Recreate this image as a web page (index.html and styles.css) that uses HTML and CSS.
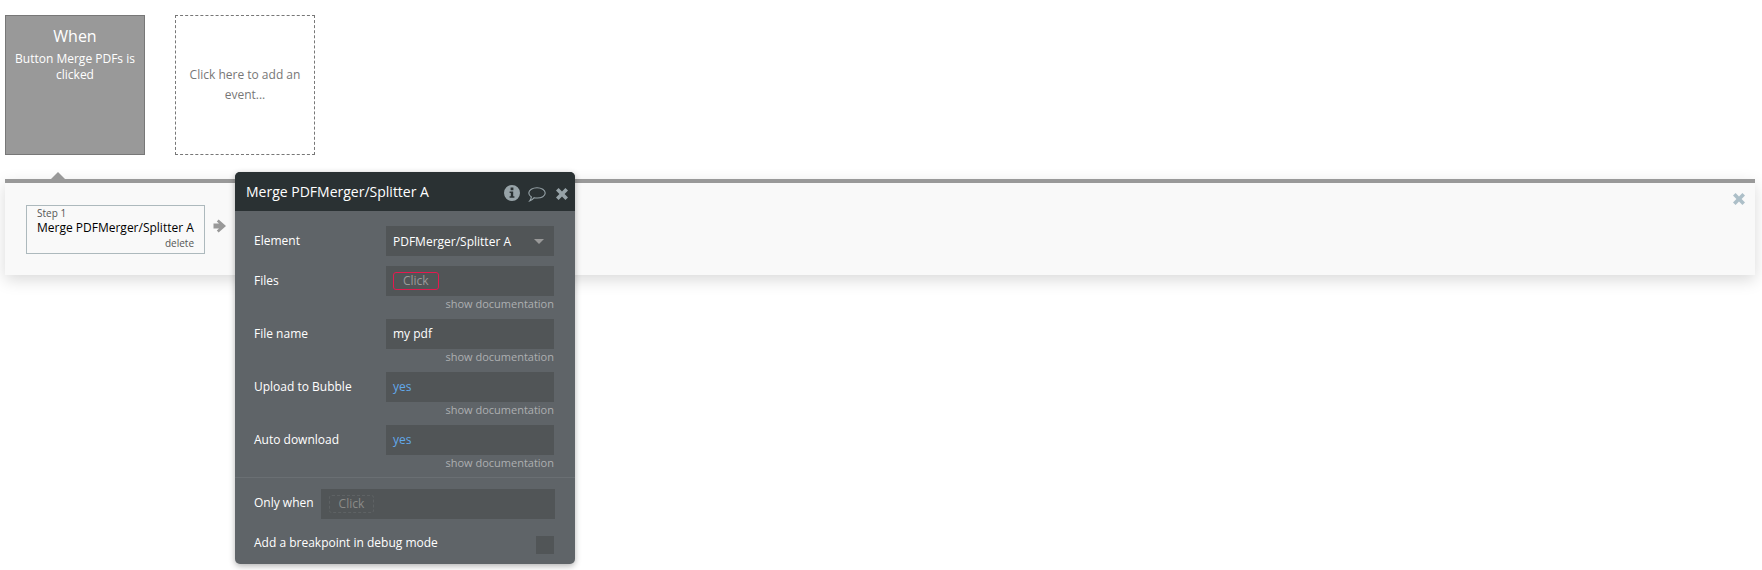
FILE: index.html
```html
<!DOCTYPE html>
<html lang="en">
<head>
<meta charset="utf-8">
<title>Workflow</title>
<link rel="stylesheet" href="styles.css">
</head>
<body>
<div class="events">
  <div class="event-card">
    <div class="event-title">When</div>
    <div class="event-desc">Button Merge PDFs is clicked</div>
  </div>
  <div class="event-add">Click here to add an event...</div>
</div>
<div class="sheet">
  <svg class="notch" width="16" height="8" viewBox="0 0 16 8"><path d="M0 8 L8 0 L16 8 Z"/></svg>
  <div class="step">
    <div class="step-num">Step 1</div>
    <div class="step-name">Merge PDFMerger/Splitter A</div>
    <div class="step-del">delete</div>
  </div>
  <svg class="step-arrow" width="14" height="14" viewBox="0 0 14 14"><path d="M.5 4.6 H6 L3.8 2.4 L5.6 .6 L13 7 L5.6 13.4 L3.8 11.6 L6 9.4 H.5 Z"/></svg>
  <svg class="sheet-close" width="14" height="14" viewBox="0 0 14 14"><path d="M1 3.6 L3.6 1 L7 4.4 L10.4 1 L13 3.6 L9.6 7 L13 10.4 L10.4 13 L7 9.6 L3.6 13 L1 10.4 L4.4 7 Z"/></svg>
</div>
<div class="popup">
  <div class="popup-head">
    <div class="popup-title">Merge PDFMerger/Splitter A</div>
    <svg class="ico-info" width="16" height="16" viewBox="0 0 16 16"><path fill-rule="evenodd" d="M8 0 A8 8 0 1 1 8 16 A8 8 0 1 1 8 0 Z M6.6 2.6 V5.2 H9.4 V2.6 Z M5.6 6.4 V8 H6.8 V11.2 H5.6 V12.8 H10.4 V11.2 H9.2 V6.4 Z"/></svg>
    <svg class="ico-chat" width="18" height="15" viewBox="0 0 18 15"><path d="M9 .8 C13.4 .8 17.2 2.9 17.2 6 C17.2 9 13.6 11.1 9 11 C8 11 7 10.9 6.2 10.7 C5 12.2 3.4 13.6 1.6 14 C2.6 12.8 3.2 11.4 3.4 9.9 C1.6 8.9 .8 7.5 .8 6 C.8 2.9 4.6 .8 9 .8 Z"/></svg>
    <svg class="ico-close" width="14" height="14" viewBox="0 0 14 14"><path d="M1 3.6 L3.6 1 L7 4.4 L10.4 1 L13 3.6 L9.6 7 L13 10.4 L10.4 13 L7 9.6 L3.6 13 L1 10.4 L4.4 7 Z"/></svg>
  </div>
  <div class="popup-body">
    <div class="field">
      <div class="label">Element</div>
      <div class="input dropdown"><span>PDFMerger/Splitter A</span><svg class="caret" width="10" height="5" viewBox="0 0 10 5"><path d="M0 0 H10 L5 5 Z"/></svg></div>
    </div>
    <div class="field">
      <div class="label">Files</div>
      <div class="input"><span class="click click-req">Click</span></div>
    </div>
    <div class="doc">show documentation</div>
    <div class="field">
      <div class="label">File name</div>
      <div class="input input-text">my pdf</div>
    </div>
    <div class="doc">show documentation</div>
    <div class="field">
      <div class="label">Upload to Bubble</div>
      <div class="input input-text yes">yes</div>
    </div>
    <div class="doc">show documentation</div>
    <div class="field">
      <div class="label">Auto download</div>
      <div class="input input-text yes">yes</div>
    </div>
    <div class="doc">show documentation</div>
  </div>
  <div class="popup-foot">
    <div class="only-row">
      <div class="label-auto label-only">Only when</div>
      <div class="input input-wide"><span class="click click-opt">Click</span></div>
    </div>
    <div class="debug-row">
      <div class="label-auto label-debug">Add a breakpoint in debug mode</div>
      <div class="checkbox"></div>
    </div>
  </div>
</div>
</body>
</html>
```
FILE: styles.css
```css
* { box-sizing: border-box; }
html, body { margin: 0; padding: 0; }
body {
  width: 1762px;
  height: 570px;
  overflow: hidden;
  background: #fff;
  font-family: "Open Sans", sans-serif;
  font-size: 12px;
  color: #fff;
  position: relative;
}
.events {
  display: flex;
  gap: 30px;
  padding: 15px 0 0 5px;
}
.event-card {
  width: 140px;
  height: 140px;
  background: #999;
  border: 1px solid #777;
  text-align: center;
  padding: 0 8px;
}
.event-title {
  font-size: 16px;
  line-height: 22px;
  margin-top: 9px;
}
.event-desc {
  font-size: 12px;
  line-height: 16px;
  margin-top: 4px;
}
.event-add {
  width: 140px;
  height: 140px;
  border: 1px dashed #777;
  color: #777;
  font-size: 12px;
  line-height: 20px;
  text-align: center;
  display: flex;
  align-items: center;
  padding: 0 10px 1px;
}
.sheet {
  position: relative;
  width: 1750px;
  height: 96px;
  margin: 24px 0 0 5px;
  background: #f9f9f9;
  border-top: 4px solid #999;
  box-shadow: 0 5px 15px rgba(0,0,0,.15);
  padding: 22px 0 0 21px;
  display: flex;
  align-items: flex-start;
}
.notch {
  position: absolute;
  left: 45px;
  top: -11px;
  fill: #999;
}
.step {
  width: 179px;
  height: 49px;
  border: 1px solid #adb9bd;
  padding: 0 10px;
  color: #000;
}
.step-num {
  font-size: 10px;
  line-height: 12px;
  color: #555;
  margin-top: 1px;
  margin-bottom: 1px;
}
.step-name {
  font-size: 12px;
  line-height: 16px;
  white-space: nowrap;
}
.step-del {
  font-size: 10px;
  line-height: 12px;
  color: #555;
  text-align: right;
  margin-top: 1px;
}
.step-arrow {
  fill: #999;
  margin: 14px 0 0 8px;
}
.sheet-close {
  position: absolute;
  right: 9px;
  top: 9px;
  fill: #adbfc8;
}
.popup {
  position: absolute;
  left: 235px;
  top: 172px;
  width: 340px;
  height: 392px;
  background: #5f6468;
  border-radius: 5px;
  box-shadow: 0 2px 6px rgba(0,0,0,.3);
  overflow: hidden;
}
.popup-head {
  height: 39px;
  background: #2a3133;
  display: flex;
  align-items: center;
  padding: 0 6px 0 11px;
}
.popup-title {
  font-size: 14px;
  flex: 1;
  white-space: nowrap;
}
.ico-info { fill: #97a3a8; margin: 2px 8px 0 0; }
.ico-chat { fill: none; stroke: #97a3a8; stroke-width: 1.1; margin: 5px 9px 0 0; }
.ico-close { fill: #97a3a8; margin-top: 4px; }
.popup-body {
  padding: 15px 21px 0 19px;
  height: 267px;
  border-bottom: 1px solid #6a6f73;
}
.field {
  display: flex;
  align-items: center;
  margin-top: 10px;
}
.field:first-child { margin-top: 0; }
.doc + .field { margin-top: 6px; }
.label {
  width: 132px;
  padding-bottom: 2px;
  white-space: nowrap;
}
.label-auto { white-space: nowrap; }
.label-only { padding-bottom: 3px; }
.label-debug { line-height: 14px; padding-bottom: 4px; }
.input {
  width: 168px;
  height: 30px;
  background: #515557;
  display: flex;
  align-items: center;
  padding: 0 7px;
  font-size: 12px;
}
.input-text { padding-bottom: 2px; }
.dropdown { justify-content: space-between; padding-right: 10px; }
.caret { fill: #999; }
.yes { color: #61a8ea; }
.click {
  height: 18px;
  line-height: 16px;
  border-radius: 3px;
  padding: 0 9px;
  color: #9a9a9a;
}
.click-req { border: 1px solid #e5194f; }
.click-opt { border: 1px dashed #5e6264; color: #8b8b88; margin-left: 1px; }
.doc {
  height: 17px;
  line-height: 15px;
  font-size: 11px;
  color: #adafb1;
  text-align: right;
}
.popup-foot { padding: 11px 21px 0 19px; }
.only-row {
  display: flex;
  align-items: center;
  gap: 7px;
}
.input-wide { width: 234px; flex: none; }
.debug-row {
  display: flex;
  align-items: center;
  justify-content: space-between;
  margin-top: 17px;
}
.checkbox {
  width: 18px;
  height: 18px;
  background: #515557;
}
```
